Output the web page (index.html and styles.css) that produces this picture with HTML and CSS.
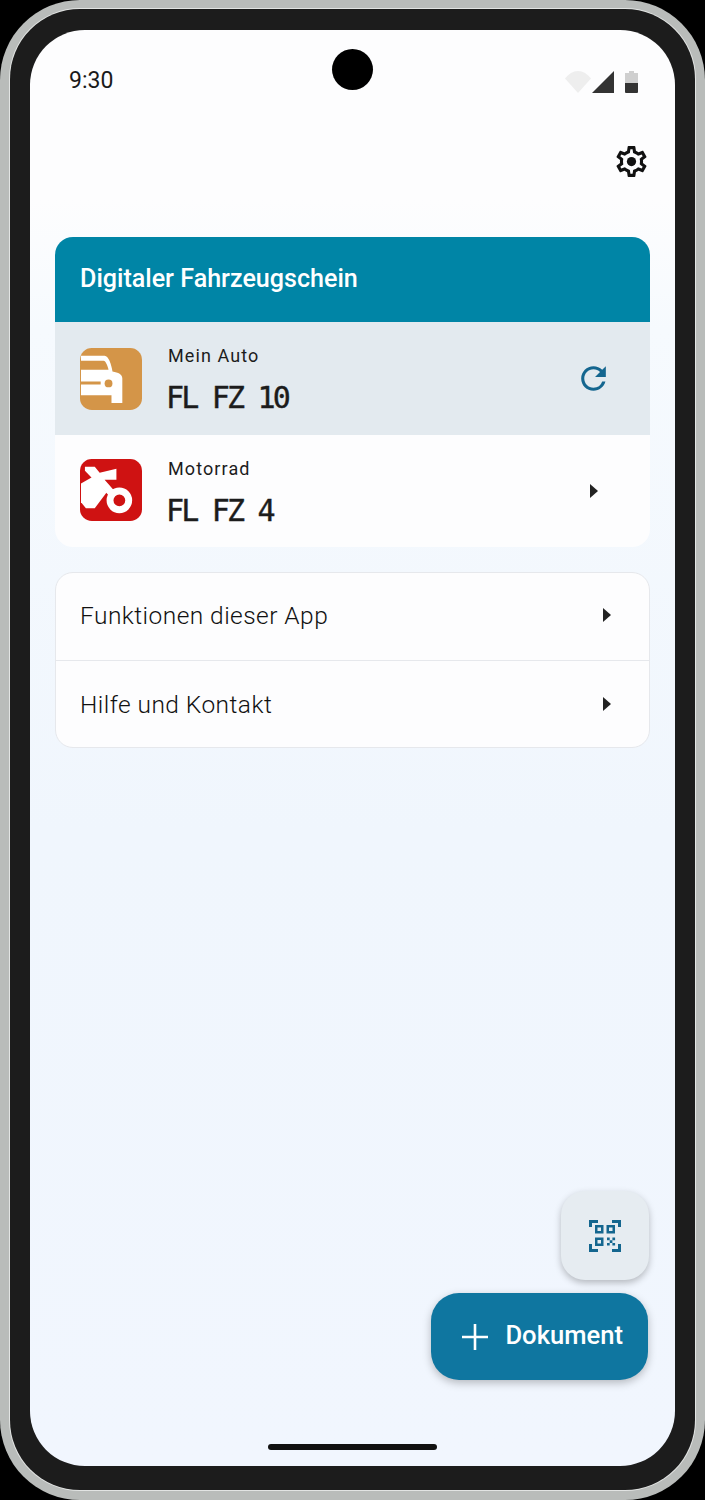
FILE: index.html
```html
<!DOCTYPE html>
<html lang="en">
<head>
    <meta charset="UTF-8">
    <meta name="viewport" content="width=device-width, initial-scale=1.0">
    <title>Digitaler Fahrzeugschein</title>
    <link rel="stylesheet" href="styles.css">
</head>
<body>
    <div class="phone">
        <div class="bezel">
            <div class="screen">
                <div class="camera"></div>
                <div class="status">
                    <span class="time">9:30</span>
                    <div class="status-icons">
                        <svg class="wifi" width="26" height="22" viewBox="0 0 26 22"><path d="M0 7.500C3.500 3 8 0 13 0s9.500 3 13 7.500L13 22z"/></svg>
                        <svg class="signal" width="22" height="22" viewBox="0 0 22 22"><path d="M22 0v22H0z"/></svg>
                        <svg class="battery" width="13" height="22" viewBox="0 0 13 22"><path class="battery-top" d="M4 0h5v2h4v10H0V2h4z"/><path class="battery-low" d="M0 12h13v9a1 1 0 0 1-1 1H1a1 1 0 0 1-1-1z"/></svg>
                    </div>
                </div>
                <div class="toolbar">
                    <svg width="37" height="37" viewBox="0 0 24 24" fill="#111"><path d="M19.430 12.980c.04-.32.07-.64.07-.98 0-.34-.03-.66-.07-.98l2.110-1.650c.19-.15.24-.42.12-.64l-2-3.460c-.09-.16-.26-.25-.44-.25-.06 0-.12.01-.17.03l-2.490 1c-.52-.4-1.080-.73-1.690-.98l-.38-2.650C14.460 2.180 14.250 2 14 2h-4c-.25 0-.46.18-.49.42l-.38 2.650c-.61.25-1.170.59-1.690.98l-2.490-1c-.06-.02-.12-.03-.18-.03-.17 0-.34.09-.43.25l-2 3.460c-.13.22-.07.49.12.64l2.110 1.650c-.04.32-.07.65-.07.98 0 .33.03.66.07.98l-2.110 1.650c-.19.15-.24.42-.12.64l2 3.460c.09.16.26.25.44.25.06 0 .12-.01.17-.03l2.490-1c.52.4 1.080.73 1.690.98l.38 2.650c.03.24.24.42.49.42h4c.25 0 .46-.18.49-.42l.38-2.650c.61-.25 1.170-.59 1.690-.98l2.490 1c.06.02.12.03.18.03.17 0 .34-.09.43-.25l2-3.460c.12-.22.07-.49-.12-.64l-2.110-1.650zm-1.980-1.710c.04.31.05.52.05.73 0 .21-.02.43-.05.73l-.14 1.130.89.7 1.080.84-.7 1.210-1.270-.51-1.040-.42-.9.68c-.43.32-.84.56-1.250.73l-1.060.43-.16 1.130-.2 1.350h-1.400l-.19-1.350-.16-1.130-1.060-.43c-.43-.18-.83-.41-1.230-.71l-.91-.7-1.060.43-1.270.51-.7-1.210 1.080-.84.89-.7-.14-1.130c-.03-.31-.05-.54-.05-.74s.02-.43.05-.73l.14-1.130-.89-.7-1.080-.84.7-1.210 1.270.51 1.040.42.9-.68c.43-.32.84-.56 1.250-.73l1.060-.43.16-1.130.2-1.350h1.390l.19 1.350.16 1.130 1.060.43c.43.18.83.41 1.230.71l.91.7 1.060-.43 1.270-.51.7 1.210-1.070.85-.89.7.14 1.130z"/><circle cx="12" cy="12" r="3"/></svg>
                </div>

                <section class="card vehicles">
                    <h1 class="card-title">Digitaler Fahrzeugschein</h1>
                    <div class="vehicle active">
                        <svg class="vehicle-icon" width="62" height="62" viewBox="0 0 63 63">
                            <rect width="63" height="63" rx="12" fill="#d49548"/>
                            <path d="M1 8h24c4 0 7 9 8 16 6 1 10 3 10 7v25H32v-8H1z" fill="#fff"/>
                            <path d="M1 13h23c2 0 4 5 5 9H1zM1 34h20v3H1z" fill="#d49548"/>
                            <circle cx="29" cy="36" r="4" fill="#d49548"/>
                        </svg>
                        <div class="vehicle-text">
                            <div class="vehicle-name">Mein Auto</div>
                            <div class="plate">FL FZ 10</div>
                        </div>
                        <svg class="vehicle-action" width="37" height="37" viewBox="0 0 24 24" fill="#14668f"><path d="M17.650 6.350A7.958 7.958 0 0 0 12 4c-4.420 0-7.990 3.580-7.990 8s3.570 8 7.990 8c3.730 0 6.840-2.550 7.730-6h-2.080A5.990 5.990 0 0 1 12 18c-3.310 0-6-2.690-6-6s2.690-6 6-6c1.660 0 3.140.69 4.220 1.780L13 11h7V4l-2.350 2.350z"/></svg>
                    </div>
                    <div class="vehicle">
                        <svg class="vehicle-icon" width="62" height="62" viewBox="0 0 63 63">
                            <rect width="63" height="63" rx="12" fill="#cf1212"/>
                            <path d="M1 25l12-7 14 16-12 16H6l-5-6z" fill="#fff"/>
                            <path d="M5 8h10l5 6 17-4v11H25l15 17-6 4L5 12z" fill="#fff"/>
                            <circle cx="40" cy="42" r="9.500" fill="#cf1212" stroke="#fff" stroke-width="7"/>
                        </svg>
                        <div class="vehicle-text">
                            <div class="vehicle-name">Motorrad</div>
                            <div class="plate">FL FZ 4</div>
                        </div>
                        <span class="vehicle-action caret-box"><span class="caret"></span></span>
                    </div>
                </section>

                <section class="card links">
                    <div class="link-row">
                        <span>Funktionen dieser App</span>
                        <span class="caret"></span>
                    </div>
                    <div class="link-row">
                        <span>Hilfe und Kontakt</span>
                        <span class="caret"></span>
                    </div>
                </section>

                <div class="actions">
                    <button class="fab-scan" type="button">
                        <svg width="32" height="32" viewBox="0 0 32 32" fill="#14668f">
                            <path d="M0 0h9v3H3v4H0zM32 0h-9v3h6v4h3zM0 32h9v-3H3v-5H0zM32 32h-9v-3h6v-5h3z"/>
                            <path d="M6 5h8.500v8.500H6zM8.500 7.500V11H12V7.500zM17.500 5H26v8.500h-8.500zM20 7.500V11h3.500V7.500zM6 17.500h8.500V26H6zM8.500 20v3.500H12V20z" fill-rule="evenodd"/>
                            <path d="M18 17.500h2.700v2.700H18zM23.400 17.500h2.700v2.700h-2.700zM20.700 20.200h2.700v2.700h-2.700zM18 22.900h2.700v2.700H18zM23.400 22.900h2.700v2.700h-2.700z"/>
                        </svg>
                    </button>
                    <button class="fab-add" type="button">
                        <svg width="26" height="26" viewBox="0 0 26 26"><path d="M13 0v26M0 13h26" stroke="#fff" stroke-width="2.600"/></svg>
                        <span class="fab-label">Dokument</span>
                    </button>
                </div>
                <div class="home-bar"></div>
            </div>
        </div>
    </div>
</body>
</html>
```

FILE: styles.css
```css
html, body {
    margin: 0;
    background: #000;
    font-family: 'Roboto', sans-serif;
}
.phone {
    box-sizing: border-box;
    width: 705px;
    height: 1500px;
    padding: 9px 10px 10px 10px;
    background: #b9bcba;
    border-radius: 80px;
}
.bezel {
    box-sizing: border-box;
    height: 100%;
    padding: 21px 20px 24px 20px;
    background: #1c1c1c;
    border-radius: 70px;
    box-shadow: 0 0 0 1px #e2e4e3;
}
.screen {
    position: relative;
    box-sizing: border-box;
    display: flex;
    flex-direction: column;
    height: 100%;
    padding: 0 25px 16px 25px;
    border-radius: 55px;
    background: linear-gradient(#fdfdfe 0, #fdfdfe 170px, #f6fafe 300px, #f0f6fd 800px, #f1f6fe 100%);
}
.camera {
    position: absolute;
    top: 19px;
    left: 302px;
    width: 41px;
    height: 41px;
    border-radius: 50%;
    background: #000;
}
.status {
    display: flex;
    justify-content: space-between;
    align-items: flex-start;
    height: 22px;
    margin: 41px 12px 0 14px;
}
.time {
    font-size: 23px;
    line-height: 20px;
    color: #1a1a1a;
}
.status-icons {
    display: flex;
    gap: 1px;
}
.wifi { fill: #eeeeee; }
.signal { fill: #333; }
.battery { margin-left: 10px; }
.battery-top { fill: #cfcfcf; }
.battery-low { fill: #333; }
.toolbar {
    display: flex;
    justify-content: flex-end;
    margin-top: 50px;
}
.card {
    background: #fdfdfe;
    border-radius: 18px;
    overflow: hidden;
}
.vehicles {
    margin-top: 57px;
}
.card-title {
    box-sizing: border-box;
    height: 85px;
    margin: 0;
    padding-left: 25px;
    background: #0085a6;
    color: #fff;
    font-size: 25.100px;
    font-weight: 500;
    line-height: 84px;
}
.vehicle {
    display: flex;
    align-items: center;
    height: 112px;
    padding-left: 25px;
}
.vehicle.active {
    height: 113px;
    background: #e3eaef;
}
.vehicle-icon {
    flex: none;
    margin-bottom: 2px;
}
.active .vehicle-icon {
    margin-top: 1px;
    margin-bottom: 0;
}
.vehicle-text {
    flex: 1;
    margin-left: 26px;
    padding-top: 3px;
}
.vehicle-name {
    font-size: 18px;
    letter-spacing: 1.100px;
    line-height: 24px;
    color: #1c1c1c;
}
.plate {
    margin-top: 12px;
    margin-left: -2px;
    font-family: 'DejaVu Sans Mono', monospace;
    font-size: 30px;
    letter-spacing: -2.800px;
    line-height: 36px;
    color: #1c1c1c;
    -webkit-text-stroke: 0.400px #1c1c1c;
}
.vehicle-action {
    flex: none;
    margin-right: 38px;
}
.caret-box {
    display: flex;
    justify-content: center;
    width: 37px;
}
.caret {
    width: 0;
    height: 0;
    border-left: 8px solid #222;
    border-top: 7px solid transparent;
    border-bottom: 7px solid transparent;
}
.links {
    margin-top: 25px;
    border: 1px solid #e6e8ec;
}
.link-row {
    display: flex;
    justify-content: space-between;
    align-items: center;
    box-sizing: border-box;
    height: 87px;
    padding: 0 38px 3px 24px;
    font-size: 24.500px;
    font-weight: 300;
    letter-spacing: 0.450px;
    color: #111;
}
.link-row + .link-row {
    border-top: 1px solid #e6e8ec;
    padding-bottom: 0;
}
.actions {
    display: flex;
    flex-direction: column;
    align-items: flex-end;
    gap: 13px;
    margin-top: auto;
    margin-bottom: 64px;
}
.fab-scan {
    display: flex;
    justify-content: center;
    align-items: center;
    width: 88px;
    height: 89px;
    padding: 0;
    margin-right: 1px;
    border: 0;
    border-radius: 24px;
    background: #e6ecf1;
    box-shadow: 0 3px 7px rgba(0, 0, 0, 0.25);
}
.fab-add {
    display: flex;
    align-items: center;
    gap: 17px;
    height: 87px;
    padding: 0 25px 0 31px;
    margin-right: 2px;
    border: 0;
    border-radius: 28px;
    background: #0f76a0;
    box-shadow: 0 3px 8px rgba(0, 0, 0, 0.25);
    color: #fff;
    font-family: 'Roboto', sans-serif;
    font-size: 25.600px;
    font-weight: 500;
}
.fab-label {
    padding-bottom: 3px;
}
.home-bar {
    flex: none;
    align-self: center;
    width: 169px;
    height: 6px;
    border-radius: 3px;
    background: #111;
}
```
